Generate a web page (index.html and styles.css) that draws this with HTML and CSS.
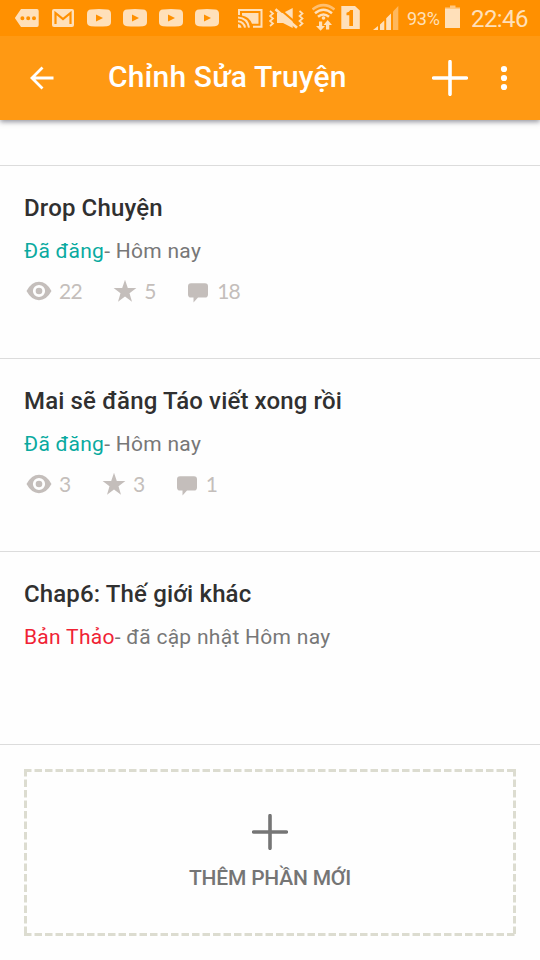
FILE: index.html
```html
<!DOCTYPE html>
<html lang="vi">
<head>
<meta charset="utf-8">
<title>Chỉnh Sửa Truyện</title>
<link rel="stylesheet" href="styles.css">
</head>
<body>
<svg class="defs" aria-hidden="true">
  <symbol id="video" viewBox="0 0 24 36"><path fill-rule="evenodd" d="M4 9.500Q12 8.500 20 9.500Q24 9.500 24 14V22Q24 26 20 26.200Q12 27 4 26.200Q0 26 0 22V14Q0 9.500 4 9.500ZM9 14.500V21.500L16 18Z"/></symbol>
  <symbol id="eye" viewBox="0 0 26 24"><path fill-rule="evenodd" d="M.5 12Q5.500 2.800 13 2.800T25.500 12Q20.500 21.200 13 21.200T.5 12ZM13 5.900a6.100 6.100 0 1 0 0 12.200a6.100 6.100 0 1 0 0-12.200Z"/><circle cx="13" cy="12" r="3.300"/></symbol>
  <symbol id="star" viewBox="0 0 24 24"><path d="M12 .8L14.800 9H23.400L16.500 14.200L19 22.800L12 17.600L5 22.800L7.500 14.200L.6 9H9.200Z"/></symbol>
  <symbol id="comment" viewBox="0 0 22 24"><path d="M4 4.200H18Q21 4.200 21 7.200V15.500Q21 18.600 18 18.600H11L6.500 23.500V18.600H4Q1 18.600 1 15.500V7.200Q1 4.200 4 4.200Z"/></symbol>
  <symbol id="plus" viewBox="0 0 36 36"><path d="M18 1.700V34.300M1.700 18H34.300" fill="none" stroke="currentColor" stroke-width="3.600" stroke-linecap="round"/></symbol>
</svg>

<header class="top">
  <div class="status">
    <div class="notifications">
      <svg class="messages" width="24" height="36" viewBox="15 0 24 36"><path fill-rule="evenodd" d="M21 9H37Q38.700 9 38.700 11V25Q38.700 27 37 27H21L14.800 18ZM22.400 16.200a2 2 0 1 0 0 4a2 2 0 1 0 0-4ZM28.200 16.200a2 2 0 1 0 0 4a2 2 0 1 0 0-4ZM34 16.200a2 2 0 1 0 0 4a2 2 0 1 0 0-4Z"/></svg>
      <svg class="mail" width="22" height="36" viewBox="52 0 22 36"><rect x="52" y="9" width="22" height="18" rx="2"/><path d="M55.500 24V13L63 19L70.500 13V24" fill="none" stroke="#ff9000" stroke-width="2.200"/></svg>
      <svg width="24" height="36"><use href="#video"/></svg>
      <svg width="24" height="36"><use href="#video"/></svg>
      <svg width="24" height="36"><use href="#video"/></svg>
      <svg width="24" height="36"><use href="#video"/></svg>
    </div>
    <div class="system">
      <svg width="25" height="36" viewBox="238 0 25 36"><path d="M239 15V10H261.500V26.700H253" fill="none" stroke="currentColor" stroke-width="2"/><path d="M242 13H258.500V23.800H252Q249 16.500 242 15.500Z"/><path d="M238 17.500Q247.500 18 249 27.700M238 21.300Q244 22 245 27.700" fill="none" stroke="currentColor" stroke-width="2"/><path d="M238 24Q241 24.500 241.500 27.800H238Z"/></svg>
      <svg class="mute" width="35" height="36" viewBox="269 0 35 36"><path d="M277 13H283L292.700 8V28L283 23H277Z"/><path d="M278.500 8L299 25.500" stroke="#ff9000" stroke-width="2.200"/><path d="M275.500 9.300L297 27.700" stroke="currentColor" stroke-width="2.600"/><path d="M270 11L273 13.500L270 16L273 18.500L270 21L273 23.500L270 26M299.500 11L302.500 13.500L299.500 16L302.500 18.500L299.500 21L302.500 23.500L299.500 26" fill="none" stroke="currentColor" stroke-width="1.700"/></svg>
      <svg class="wifi" width="23" height="36" viewBox="312 0 23 36"><path d="M312.500 9.500Q323.500 .8 334.500 9.500" fill="none" stroke="currentColor" stroke-width="2.500" opacity=".6"/><path d="M315 13.200Q323.500 6.200 332 13.200M318 16.700Q323.500 12.200 329 16.700" fill="none" stroke="currentColor" stroke-width="2.500"/><circle cx="323.500" cy="18" r="1.800"/><path d="M319 21.500H322.200V26H325L320.600 30.800L316 26H319ZM326 29.500V25H323.500L327.700 20L332 25H329.200V29.500Z"/></svg>
      <svg class="sim" width="19" height="36" viewBox="341 0 19 36"><path d="M341.300 6H355L359.800 10.500V29H341.300Z"/><path d="M346.500 12.800Q349.500 12 350.300 9.900H353V26H349.300V15.200H346.500Z" fill="#ff9000"/></svg>
      <svg class="signal" width="26" height="36" viewBox="373 0 26 36"><path d="M373 30L378 26V30ZM380 24.500L384.300 20.500V30H380ZM386.200 18.300L391 13.500V30H386.200Z"/><path opacity=".5" d="M393 11.500L398.300 6V30H393Z"/></svg>
      <span class="percent">93%</span>
      <svg class="battery" width="16" height="36" viewBox="445 0 16 36"><path opacity=".7" d="M450 5.500H455.500V7.500H460V10H445V7.500H450Z"/><path d="M445 9H460V28H445Z"/></svg>
      <span class="clock">22:46</span>
    </div>
  </div>
  <div class="toolbar">
    <svg class="back" width="26" height="26" viewBox="0 0 26 26"><path d="M24.500 13H3M13.500 2.500L3 13L13.500 23.500" fill="none" stroke="currentColor" stroke-width="2.800"/></svg>
    <h1>Chỉnh Sửa Truyện</h1>
    <svg class="add" width="36" height="36"><use href="#plus"/></svg>
    <svg class="more" width="8" height="26" viewBox="0 0 8 26"><circle cx="4" cy="4" r="3.100"/><circle cx="4" cy="13" r="3.100"/><circle cx="4" cy="22" r="3.100"/></svg>
  </div>
</header>

<main>
  <article class="part">
    <h2>Drop Chuyện</h2>
    <p><span class="published">Đã đăng</span>- Hôm nay</p>
    <div class="stats">
      <span class="stat"><svg width="26" height="24"><use href="#eye"/></svg>22</span>
      <span class="stat"><svg width="24" height="24"><use href="#star"/></svg>5</span>
      <span class="stat comments"><svg width="22" height="24"><use href="#comment"/></svg>18</span>
    </div>
  </article>
  <article class="part">
    <h2>Mai sẽ đăng Táo viết xong rồi</h2>
    <p><span class="published">Đã đăng</span>- Hôm nay</p>
    <div class="stats">
      <span class="stat"><svg width="26" height="24"><use href="#eye"/></svg>3</span>
      <span class="stat"><svg width="24" height="24"><use href="#star"/></svg>3</span>
      <span class="stat comments"><svg width="22" height="24"><use href="#comment"/></svg>1</span>
    </div>
  </article>
  <article class="part">
    <h2>Chap6: Thế giới khác</h2>
    <p><span class="draft">Bản Thảo</span>- đã cập nhật Hôm nay</p>
  </article>
  <section class="new-wrap">
    <div class="new-part">
      <svg class="outline" width="492" height="167"><path d="M0 1.500H492M0 165.500H492M1.500 0V167M490.500 0V167"/></svg>
      <svg width="36" height="36"><use href="#plus"/></svg>
      <span>THÊM PHẦN MỚI</span>
    </div>
  </section>
</main>
</body>
</html>
```
FILE: styles.css
```css
* { box-sizing: border-box; }
body {
  margin: 0;
  width: 540px;
  height: 960px;
  overflow: hidden;
  background: #fefefe;
  font-family: Roboto, "Noto Sans", sans-serif;
}
svg { display: block; flex: none; fill: currentColor; }
.defs { display: none; }
h1, h2, p { margin: 0; white-space: nowrap; }

.top {
  height: 120px;
  background: #ff9913;
  box-shadow: 0 2px 5px rgba(50, 50, 65, .5);
}
.status {
  display: flex;
  height: 36px;
  padding-left: 15px;
  background: #ff9000;
  color: #ffe0ba;
}
.notifications { display: flex; gap: 12px; width: 223px; }
.mail { margin: 0 1px; }
.system { display: flex; }
.mute { margin-left: 6px; }
.wifi { margin-left: 8px; }
.sim { margin-left: 6px; }
.signal { margin-left: 13px; }
.percent {
  width: 38px;
  margin-left: 8px;
  font-size: 18px;
  line-height: 38px;
  letter-spacing: -.3px;
}
.clock {
  margin-left: 10px;
  font-size: 24px;
  line-height: 38px;
  letter-spacing: -.6px;
}

.toolbar {
  display: flex;
  align-items: center;
  height: 84px;
  padding-left: 29px;
  color: #fff;
}
.toolbar h1 {
  width: 324px;
  margin: 0 0 2px 53px;
  font-size: 30px;
  font-weight: 500;
  line-height: 40px;
  letter-spacing: .15px;
}
.more { margin-left: 32px; }

main { padding-top: 45px; }
.part {
  height: 193px;
  padding: 26px 24px 0;
  border-top: 1px solid #dcdcdc;
}
.part h2 {
  font-size: 24px;
  font-weight: 500;
  line-height: 32px;
  letter-spacing: .14px;
  color: #303030;
}
.part p {
  margin-top: 12px;
  font-size: 21px;
  line-height: 30px;
  letter-spacing: .29px;
  color: #777;
}
.part .published { color: #0aaaa0; }
.part .draft { color: #f02234; }
.stats {
  display: flex;
  gap: 31.5px;
  margin: 13px 0 0 2px;
  font-family: Lato, sans-serif;
  font-size: 21px;
  line-height: 24px;
  letter-spacing: -.8px;
  color: #c4bebb;
}
.stat { display: flex; gap: 7px; }
.comments { gap: 8px; }

.new-wrap {
  padding: 24px;
  border-top: 1px solid #dcdcdc;
}
.new-part {
  position: relative;
  display: flex;
  flex-direction: column;
  align-items: center;
  height: 167px;
  padding-top: 45px;
  color: #757575;
}
.new-part span {
  margin-top: 13px;
  font-size: 21px;
  font-weight: 500;
  line-height: 30px;
  letter-spacing: -.2px;
}
.outline {
  position: absolute;
  inset: 0;
  fill: none;
  stroke: #dcdcd0;
  stroke-width: 3;
  stroke-dasharray: 7.500 3;
}
```
